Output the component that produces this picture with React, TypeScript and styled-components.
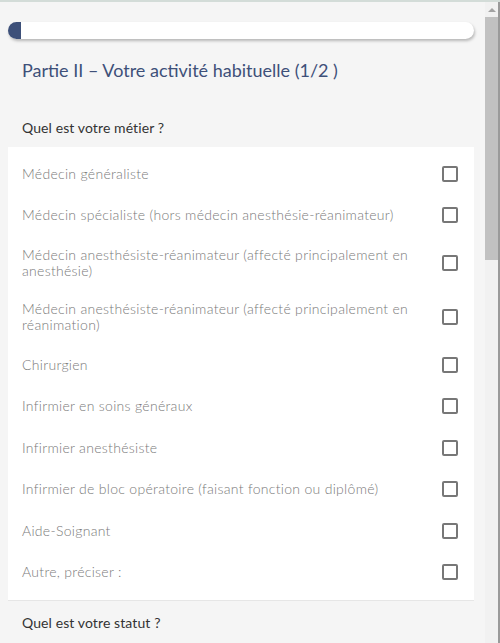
import React from "react";
import styled, { createGlobalStyle } from "styled-components";

const metiers = [
  "Médecin généraliste",
  "Médecin spécialiste (hors médecin anesthésie-réanimateur)",
  "Médecin anesthésiste-réanimateur (affecté principalement en anesthésie)",
  "Médecin anesthésiste-réanimateur (affecté principalement en réanimation)",
  "Chirurgien",
  "Infirmier en soins généraux",
  "Infirmier anesthésiste",
  "Infirmier de bloc opératoire (faisant fonction ou diplômé)",
  "Aide-Soignant",
  "Autre, préciser :",
];

export default function App() {
  return (
    <>
      <GlobalStyle />
      <Frame>
        <Main>
          <Progress>
            <ProgressFill />
          </Progress>
          <Title>Partie II – Votre activité habituelle (1/2 )</Title>
          <Question>Quel est votre métier ?</Question>
          <Card>
            {metiers.map((m) => (
              <Option key={m}>
                <Label>{m}</Label>
                <Box type="checkbox" />
              </Option>
            ))}
          </Card>
          <Question $next>Quel est votre statut ?</Question>
        </Main>
        <Scrollbar>
          <Arrow />
          <Thumb />
        </Scrollbar>
        <Outside />
      </Frame>
    </>
  );
}

const GlobalStyle = createGlobalStyle`
  * { box-sizing: border-box; }
  html, body { margin: 0; height: 100%; overflow: hidden; }
  body {
    font-family: Lato, "Open Sans", sans-serif;
    background: #f5f5f5;
  }
`;

const Frame = styled.div`
  display: flex;
  height: 643px;
  border-top: 2px solid #d3dcd8;
  background: #f5f5f5;
`;

const Main = styled.div`
  flex: 1;
  overflow: hidden;
  padding: 20px 11px 0 8px;
`;

const Progress = styled.div`
  height: 17px;
  border-radius: 9px;
  background: #fff;
  box-shadow: 1px 2px 3px rgba(0, 0, 0, 0.25);
  overflow: hidden;
`;

const ProgressFill = styled.div`
  width: 13px;
  height: 100%;
  background: #3d5079;
`;

const Title = styled.h1`
  margin: 0;
  padding: 19px 14px 0;
  font-size: 18px;
  font-weight: 400;
  line-height: 24px;
  color: #3e5079;
`;

const Question = styled.p<{ $next?: boolean }>`
  margin: 0;
  padding: ${(p) => (p.$next ? "13px 14px 12px" : "37px 14px 10px")};
  font-size: 14px;
  line-height: 18px;
  color: #333;
  letter-spacing: 0.1px;
`;

const Card = styled.div`
  background: #fff;
  padding: 6px 0 7px;
  border-bottom: 1px solid #e6e6e6;
`;

const Option = styled.label`
  display: flex;
  align-items: center;
  justify-content: space-between;
  min-height: 41.5px;
  padding: 11px 16px 11px 14px;
`;

const Label = styled.span`
  max-width: 400px;
  font-size: 14px;
  font-weight: 300;
  line-height: 16px;
  letter-spacing: 0.3px;
  color: #7a7a7a;
`;

const Box = styled.input`
  appearance: none;
  margin: 0;
  flex-shrink: 0;
  width: 16px;
  height: 16px;
  border: 2px solid #777;
  border-radius: 2px;
  background: #fff;
`;

const Scrollbar = styled.div`
  width: 13px;
  background: #f1f1f1;
  display: flex;
  flex-direction: column;
`;

const Arrow = styled.div`
  height: 15px;
  display: flex;
  align-items: center;
  justify-content: center;

  &::before {
    content: "";
    border-left: 4px solid transparent;
    border-right: 4px solid transparent;
    border-bottom: 4px solid #a3a3a3;
  }
`;

const Thumb = styled.div`
  height: 243px;
  background: #c1c1c1;
`;

const Outside = styled.div`
  width: 2px;
  background: #9a9a9a;
`;
